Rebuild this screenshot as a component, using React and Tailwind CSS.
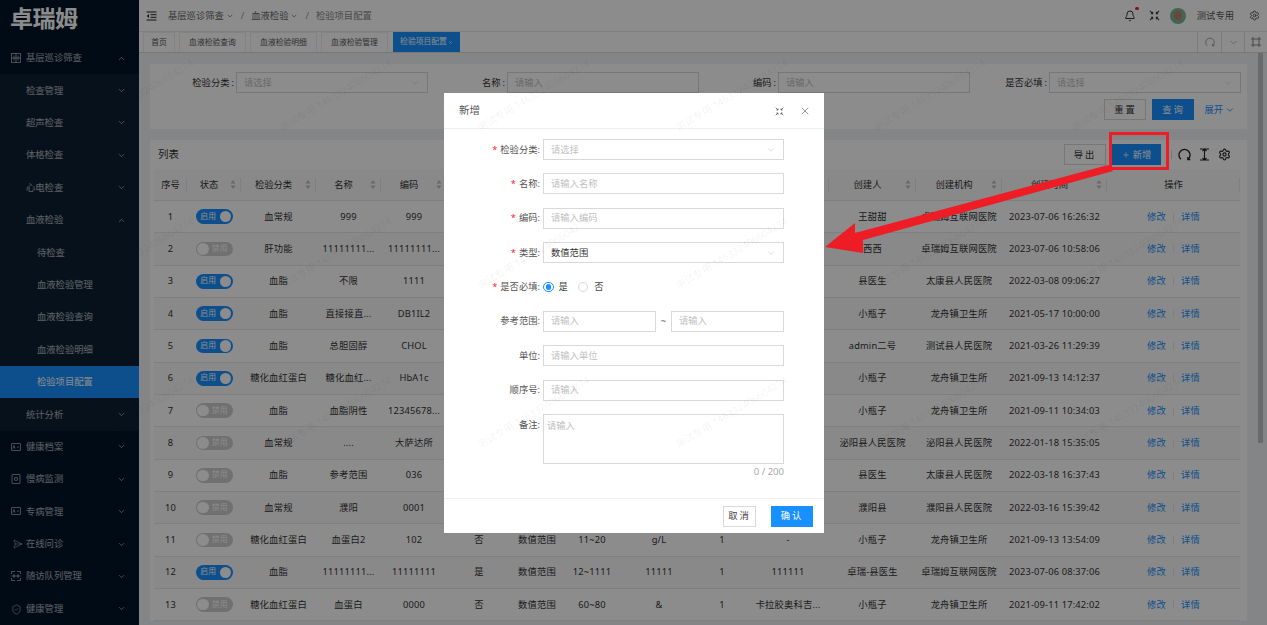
import { ChevronDown, ChevronUp, Bell, Settings, X, Send, ShieldCheck, Plus } from "lucide-react";

const FONT = { fontFamily: '"Noto Sans", "Noto Sans CJK SC", sans-serif' };

const COLS = "grid grid-cols-[33px_54px_75px_65px_66px_64px_52px_58px_76px_50px_82px_87px_86px_105px_133px]";

const HEADS = [
  ["序号"], ["状态", 1], ["检验分类", 1], ["名称", 1], ["编码", 1], ["是否必填", 1], ["类型", 1], ["参考范围"],
  ["单位"], ["顺序号"], ["备注"], ["创建人", 1], ["创建机构", 1], ["创建时间", 1], ["操作"],
];

const ROWS = [
  [1, true, "血常规", "999", "999", "否", "数值范围", "1~20", "g/L", 1, "-", "王甜甜", "卓瑞姆互联网医院", "2023-07-06 16:26:32"],
  [2, false, "肝功能", "11111111...", "11111111...", "否", "数值范围", "1~20", "g/L", 1, "-", "西西", "卓瑞姆互联网医院", "2023-07-06 10:58:06"],
  [3, true, "血脂", "不限", "1111", "否", "数值范围", "1~20", "g/L", 1, "-", "县医生", "太康县人民医院", "2022-03-08 09:06:27"],
  [4, true, "血脂", "直接接直...", "DB1IL2", "否", "数值范围", "1~20", "g/L", 1, "-", "小瓶子", "龙舟镇卫生所", "2021-05-17 10:00:00"],
  [5, true, "血脂", "总胆固醇", "CHOL", "否", "数值范围", "1~20", "g/L", 1, "-", "admin二号", "测试县人民医院", "2021-03-26 11:29:39"],
  [6, true, "糖化血红蛋白", "糖化血红...", "HbA1c", "否", "数值范围", "1~20", "g/L", 1, "-", "小瓶子", "龙舟镇卫生所", "2021-09-13 14:12:37"],
  [7, false, "血脂", "血脂阴性", "12345678...", "否", "数值范围", "1~20", "g/L", 1, "-", "小瓶子", "龙舟镇卫生所", "2021-09-11 10:34:03"],
  [8, false, "血常规", "....", "大萨达所", "否", "数值范围", "1~20", "g/L", 1, "-", "泌阳县人民医院", "泌阳县人民医院", "2022-01-18 15:35:05"],
  [9, false, "血脂", "参考范围", "036", "否", "数值范围", "1~20", "g/L", 1, "-", "县医生", "太康县人民医院", "2022-03-18 16:37:43"],
  [10, false, "血常规", "濮阳", "0001", "否", "数值范围", "1~20", "g/L", 1, "-", "濮阳县", "濮阳县人民医院", "2022-03-16 15:39:42"],
  [11, false, "糖化血红蛋白", "血蛋白2", "102", "否", "数值范围", "11~20", "g/L", 1, "-", "小瓶子", "龙舟镇卫生所", "2021-09-13 13:54:09"],
  [12, true, "血脂", "11111111...", "11111111", "是", "数值范围", "12~1111", "11111", 1, "111111", "卓瑞-县医生", "卓瑞姆互联网医院", "2023-07-06 08:37:06"],
  [13, false, "糖化血红蛋白", "血蛋白", "0000", "否", "数值范围", "60~80", "&", 1, "卡拉胶奥科吉...", "小瓶子", "龙舟镇卫生所", "2021-09-11 17:42:02"],
];

const MENU_TOP = [
  { label: "健康档案", icon: "card" },
  { label: "慢病监测", icon: "box" },
  { label: "专病管理", icon: "card" },
  { label: "在线问诊", icon: "send" },
  { label: "随访队列管理", icon: "scan" },
  { label: "健康管理", icon: "shield" },
];

function Expand({ size = 10, className = "" }) {
  return (
    <svg width={size} height={size} viewBox="0 0 12 12" fill="none" stroke="currentColor" strokeWidth="1.1" className={className}>
      <path d="M1 1l3 3M11 1L8 4M1 11l3-3M11 11L8 8" />
      <path d="M4 2v2H2M8 2v2h2M4 10V8H2M8 10V8h2" />
    </svg>
  );
}

function Reload({ size = 12, strokeWidth = 1.3 }) {
  return (
    <svg width={size} height={size} viewBox="0 0 14 14" fill="none" stroke="currentColor" strokeWidth={strokeWidth}>
      <path d="M3.2 12.2A6 6 0 1 1 10.8 12.2" />
      <path d="M10.6 9.6v2.8h2.6" />
    </svg>
  );
}

function MenuIcon({ type }) {
  if (type === "grid")
    return (
      <svg width="10" height="10" viewBox="0 0 10 10" fill="none" stroke="currentColor" strokeWidth="0.8">
        <rect x="0.5" y="0.5" width="9" height="9" />
        <path d="M0.5 5h9M5 0.5v9M3 2.5v5M7 2.5v5" />
      </svg>
    );
  if (type === "card")
    return (
      <svg width="10" height="10" viewBox="0 0 10 10" fill="none" stroke="currentColor" strokeWidth="0.8">
        <rect x="0.5" y="1.5" width="9" height="7" rx="0.5" />
        <path d="M2 6.5l1-3 1 3M6 5h2" />
      </svg>
    );
  if (type === "box")
    return (
      <svg width="10" height="10" viewBox="0 0 10 10" fill="none" stroke="currentColor" strokeWidth="0.8">
        <rect x="1" y="0.5" width="8" height="9" rx="0.5" />
        <circle cx="5" cy="5" r="1.6" />
      </svg>
    );
  if (type === "scan")
    return (
      <svg width="10" height="10" viewBox="0 0 10 10" fill="none" stroke="currentColor" strokeWidth="0.8">
        <path d="M0.5 3V0.5H4M6 0.5h3.5V3M9.5 7v2.5H6M4 9.5H0.5V7M0.5 5h9M3 3v4M7 3v4" />
      </svg>
    );
  if (type === "send") return <Send size={10} strokeWidth={1.4} className="rotate-45" />;
  return <ShieldCheck size={11} strokeWidth={1.4} />;
}

function MenuItem({ label, icon, pad = "pl-[26px]", open, arrow = true, active, dark }) {
  return (
    <div className={`h-[32.4px] flex items-center pr-[13px] relative ${pad} ${active ? "bg-[#1890ff] text-white" : "text-white/65"} ${dark ? "bg-[#001529]" : ""}`}>
      {icon && <span className="absolute left-[11px] top-[11px]"><MenuIcon type={icon} /></span>}
      <span className="flex-1">{label}</span>
      {arrow && (open ? <ChevronUp size={9} /> : <ChevronDown size={9} />)}
    </div>
  );
}

function Sidebar() {
  return (
    <div className="w-[139px] shrink-0 bg-[#001529] text-[9.3px]">
      <div className="h-[42px] pl-[10px] pt-[3px] text-[23px] leading-[30px] font-bold text-white tracking-[-0.5px]">卓瑞姆</div>
      <MenuItem label="基层巡诊筛查" icon="grid" open dark />
      <div className="bg-[#0e2034]">
        <MenuItem label="检查管理" />
        <MenuItem label="超声检查" />
        <MenuItem label="体格检查" />
        <MenuItem label="心电检查" />
        <MenuItem label="血液检验" open />
        <MenuItem label="待检查" pad="pl-[37px]" arrow={false} />
        <MenuItem label="血液检验管理" pad="pl-[37px]" arrow={false} />
        <MenuItem label="血液检验查询" pad="pl-[37px]" arrow={false} />
        <MenuItem label="血液检验明细" pad="pl-[37px]" arrow={false} />
        <MenuItem label="检验项目配置" pad="pl-[37px]" arrow={false} active />
        <MenuItem label="统计分析" />
      </div>
      {MENU_TOP.map((m) => <MenuItem key={m.label} label={m.label} icon={m.icon} />)}
    </div>
  );
}

function TopBar() {
  return (
    <div className="h-[32px] bg-white flex items-center pl-[7px] pr-[7px] border-b border-[#e8e8e8] text-[9.3px] text-[#666]">
      <svg width="11" height="10" viewBox="0 0 11 10" fill="none" stroke="#222" strokeWidth="1">
        <path d="M0.5 1h10M4.5 3.7h6M4.5 6.3h6M0.5 9h10" />
        <path d="M3 3L0.8 5 3 7z" fill="#222" stroke="none" />
      </svg>
      <div className="flex items-center ml-[11px]">
        <span>基层巡诊筛查</span><ChevronDown size={8} className="ml-[2px]" />
        <span className="mx-[7px] text-[#999]">/</span>
        <span>血液检验</span><ChevronDown size={8} className="ml-[2px]" />
        <span className="mx-[7px] text-[#999]">/</span>
        <span className="text-[#888]">检验项目配置</span>
      </div>
      <div className="ml-auto flex items-center text-[#333]">
        <span className="relative">
          <Bell size={12} />
          <span className="absolute -top-[3px] -right-[3px] w-[3.5px] h-[3.5px] rounded-full bg-[#f5222d]" />
        </span>
        <Expand size={11} className="ml-[13px]" />
        <span className="ml-[10px] w-[16px] h-[16px] rounded-full bg-[#7fb59a] flex items-center justify-center overflow-hidden">
          <span className="w-[8px] h-[9px] rounded-full bg-[#b8876a]" />
        </span>
        <span className="ml-[11px] text-[#555]">测试专用</span>
        <Settings size={11} className="ml-[15px] text-[#555]" />
      </div>
    </div>
  );
}

function Tabs() {
  const tabs = ["血液检验查询", "血液检验明细", "血液检验管理"];
  return (
    <div className="h-[21px] bg-white pl-[4px] flex border-b border-[#d9d9d9] text-[7.8px] text-[#555]">
      <div className="flex gap-[4px]">
        <div className="h-[20px] w-[32px] flex items-center justify-center border border-b-0 border-[#eee]">首页</div>
        {tabs.map((t) => (
          <div key={t} className="h-[20px] w-[67px] flex items-center justify-center border border-b-0 border-[#eee]">{t}</div>
        ))}
        <div className="h-[20px] w-[67px] ml-[1px] flex items-center justify-center gap-[1px] bg-[#1890ff] text-white">
          检验项目配置<X size={5} />
        </div>
      </div>
      <div className="ml-auto flex text-[#888] h-[20px]">
        <span className="w-[24px] border-l border-[#e0e0e0] flex items-center justify-center"><Reload size={10} strokeWidth={1.1} /></span>
        <span className="w-[23px] border-l border-[#e0e0e0] flex items-center justify-center"><ChevronDown size={11} strokeWidth={1.2} /></span>
        <span className="w-[23px] border-l border-[#e0e0e0] flex items-center justify-center">
          <svg width="10" height="10" viewBox="0 0 10 10" fill="none" stroke="currentColor" strokeWidth="1">
            <path d="M2 2h6v6H2zM0 2h2V0M8 0v2h2M10 8H8v2M2 10V8H0" />
          </svg>
        </span>
      </div>
    </div>
  );
}

function Field({ label, children }) {
  return (
    <div className="flex items-center h-[21px]">
      <span className="w-[79px] text-right text-[#333] pr-[1px] whitespace-nowrap">{label}<span className="ml-[2px] mr-[1px]">:</span></span>
      {children}
    </div>
  );
}

function SelectBox({ placeholder = "请选择", value, className = "flex-1" }) {
  return (
    <div className={`h-[21px] ${className} border border-[#d9d9d9] bg-white flex items-center px-[7px]`}>
      <span className={`flex-1 ${value ? "text-[#333]" : "text-[#bfbfbf]"}`}>{value || placeholder}</span>
      <ChevronDown size={10} strokeWidth={1.2} className="text-[#bfbfbf]" />
    </div>
  );
}

function InputBox({ placeholder = "请输入", className = "flex-1" }) {
  return (
    <div className={`h-[21px] ${className} border border-[#d9d9d9] bg-white flex items-center px-[7px] text-[#bfbfbf]`}>{placeholder}</div>
  );
}

function SearchCard() {
  return (
    <div className="h-[65px] mt-[11px] bg-white pl-[7px] pr-[6px] pt-[8px]">
      <div className="grid grid-cols-4">
        <Field label="检验分类"><SelectBox /></Field>
        <Field label="名称"><InputBox /></Field>
        <Field label="编码"><InputBox /></Field>
        <Field label="是否必填"><SelectBox /></Field>
      </div>
      <div className="flex justify-end items-center mt-[6px] pr-[6px]">
        <button className="h-[21px] w-[42px] border border-[#d9d9d9] text-[#333] tracking-[0.2em]">重置</button>
        <button className="h-[21px] w-[42px] ml-[6px] bg-[#1890ff] text-white tracking-[0.2em]">查询</button>
        <span className="ml-[10px] text-[#1890ff] flex items-center gap-[2px]">展开<ChevronDown size={10} /></span>
      </div>
    </div>
  );
}

function SortCaret() {
  return (
    <svg width="6" height="9" viewBox="0 0 6 9" fill="#bfbfbf">
      <path d="M3 0l2.5 3.4h-5zM3 9L.5 5.6h5z" />
    </svg>
  );
}

function Switch({ on }) {
  return (
    <div className={`w-[37px] h-[14.5px] rounded-full flex items-center px-[1.5px] text-white text-[7.8px] ${on ? "bg-[#1890ff]" : "bg-[#cccccc] flex-row-reverse"}`}>
      <span className="flex-1 text-center">{on ? "启用" : "禁用"}</span>
      <span className="w-[11.5px] h-[11.5px] rounded-full bg-white" />
    </div>
  );
}

function Table() {
  return (
    <div className="ml-[4px] w-[1086px] text-[#333]">
      <div className={`${COLS} h-[32px] bg-[#fafafa] border-b border-[#e8e8e8]`}>
        {HEADS.map(([h, sort]) => (
          <div key={h} className="relative flex items-center justify-center">
            <span className={sort ? "pr-[10px]" : ""}>{h}</span>
            {sort && <span className="absolute right-[5px] top-[11px]"><SortCaret /></span>}
            <span className="absolute right-0 top-[9px] h-[14px] w-px bg-[#e8e8e8]" />
          </div>
        ))}
      </div>
      {ROWS.map((r) => (
        <div key={r[0]} className={`${COLS} h-[32.33px] border-b border-[#e8e8e8] tracking-[0.16px] ${r[0] % 2 === 0 ? "bg-[#fafafa]" : "bg-white"}`}>
          {r.map((c, i) => (
            <div key={i} className="flex items-center justify-center whitespace-nowrap overflow-hidden">
              {i === 1 ? <Switch on={c} /> : c}
            </div>
          ))}
          <div className="flex items-center justify-center text-[#1890ff]">
            <span>修改</span>
            <span className="mx-[7px] w-px h-[8px] bg-[#e8e8e8]" />
            <span>详情</span>
          </div>
        </div>
      ))}
    </div>
  );
}

function ListCard() {
  return (
    <div className="mt-[11px] bg-white">
      <div className="h-[29px] flex items-center pl-[8px] pr-[16px]">
        <span className="text-[10.5px] text-[#333]">列表</span>
        <div className="ml-auto flex items-center">
          <button className="h-[21px] w-[42px] border border-[#d9d9d9] text-[#333] tracking-[0.2em]">导出</button>
          <button className="h-[21px] w-[49px] ml-[6px] bg-[#1890ff] text-white flex items-center justify-center gap-[3px]">
            <Plus size={8} />新增
          </button>
          <span className="ml-[10px] h-[9px] w-px bg-[#d9d9d9]" />
          <span className="ml-[6px] text-[#222]"><Reload size={13} strokeWidth={1.4} /></span>
          <svg className="ml-[8px]" width="11" height="13" viewBox="0 0 11 13" fill="none" stroke="#222" strokeWidth="1.1">
            <path d="M1 1h9M1 12h9M5.5 1v11M3.5 3l2-2 2 2M3.5 10l2 2 2-2" />
          </svg>
          <Settings size={13} className="ml-[8px] text-[#222]" />
        </div>
      </div>
      <Table />
    </div>
  );
}

function ModalRow({ label, required, children }) {
  return (
    <div className="flex items-center h-[21px]">
      <span className="w-[96px] text-right text-[#555] whitespace-nowrap">
        {required && <span className="text-[#f5222d] mr-[3px]">*</span>}
        {label}:
      </span>
      <div className="w-[241px] ml-[3px] flex items-center">{children}</div>
    </div>
  );
}

function Modal() {
  return (
    <div className="absolute left-[444px] top-[93px] w-[380px] h-[440px] bg-white text-[9.3px] flex flex-col">
      <div className="h-[36px] shrink-0 border-b border-[#eee] flex items-center pl-[15px] pr-[13px] pt-[1px] text-[#555]">
        <span className="text-[10.5px]">新增</span>
        <Expand size={9} className="ml-auto" />
        <X size={12} strokeWidth={1.2} className="ml-[15px]" />
      </div>
      <div className="flex flex-col gap-[13.4px] pt-[10px]">
        <ModalRow label="检验分类" required><SelectBox /></ModalRow>
        <ModalRow label="名称" required><InputBox placeholder="请输入名称" /></ModalRow>
        <ModalRow label="编码" required><InputBox placeholder="请输入编码" /></ModalRow>
        <ModalRow label="类型" required><SelectBox value="数值范围" /></ModalRow>
        <ModalRow label="是否必填" required>
          <span className="w-[10.5px] h-[10.5px] rounded-full border border-[#1890ff] flex items-center justify-center">
            <span className="w-[5.5px] h-[5.5px] rounded-full bg-[#1890ff]" />
          </span>
          <span className="ml-[5px] text-[#444]">是</span>
          <span className="ml-[10px] w-[10.5px] h-[10.5px] rounded-full border border-[#d9d9d9]" />
          <span className="ml-[6px] text-[#444]">否</span>
        </ModalRow>
        <ModalRow label="参考范围">
          <InputBox className="w-[113px]" />
          <span className="w-[15px] text-center text-[#666]">~</span>
          <InputBox className="w-[113px]" />
        </ModalRow>
        <ModalRow label="单位"><InputBox placeholder="请输入单位" /></ModalRow>
        <ModalRow label="顺序号"><InputBox /></ModalRow>
        <div className="flex items-start">
          <span className="w-[96px] text-right text-[#555] pt-[4px]">备注:</span>
          <div className="w-[241px] ml-[3px]">
            <div className="h-[50px] border border-[#d9d9d9] px-[3px] pt-[4px] text-[#bfbfbf]">请输入</div>
            <div className="mt-[1px] text-right text-[#a8a8a8] text-[9.5px] leading-[14px]">0 / 200</div>
          </div>
        </div>
      </div>
      <div className="mt-auto h-[35px] border-t border-[#eee] flex justify-end items-center gap-[15px] pr-[11px]">
        <button className="h-[21px] w-[33px] border border-[#d9d9d9] text-[#444] tracking-[0.2em]">取消</button>
        <button className="h-[21px] w-[42px] bg-[#1890ff] text-white tracking-[0.2em]">确认</button>
      </div>
    </div>
  );
}

function Watermarks() {
  const cells = Array.from({ length: 32 });
  return (
    <div className="absolute left-[-112px] top-[-39px] grid grid-cols-[repeat(8,198px)] auto-rows-[158.5px] pointer-events-none">
      {cells.map((_, i) => (
        <div key={i} className="h-[14px] leading-[14px] text-[10px] text-black/[0.07] whitespace-nowrap origin-bottom-left -rotate-[31deg]">
          测试专用 146332406604274
        </div>
      ))}
    </div>
  );
}

function Annotation() {
  return (
    <>
      <div className="absolute left-[1109px] top-[132px] w-[60px] h-[38px] border-[3px] border-[#ee1c25]" />
      <svg className="absolute left-0 top-0 pointer-events-none" width="1267" height="625">
        <polygon points="825,247 855,223 855,233 1108,165 1113,171 863,240 863,253" fill="#ee1c25" />
      </svg>
    </>
  );
}

export default function App() {
  return (
    <div className="relative h-screen overflow-hidden flex bg-[#f0f2f5]" style={FONT}>
      <Sidebar />
      <div className="flex-1 min-w-0 flex flex-col text-[9.3px]">
        <TopBar />
        <Tabs />
        <div className="flex flex-1 min-h-0 overflow-hidden">
          <div className="w-[1097px] ml-[11px] shrink-0">
            <SearchCard />
            <ListCard />
          </div>
          <div className="ml-auto w-[9px] pr-[4px]">
            <div className="h-[390px] w-[5px] bg-[#c1c1c1]" />
          </div>
        </div>
      </div>
      <div className="absolute inset-0 bg-black/45" />
      <div className="absolute inset-0 overflow-hidden pointer-events-none">
        <Modal />
        <Watermarks />
        <Annotation />
      </div>
    </div>
  );
}
